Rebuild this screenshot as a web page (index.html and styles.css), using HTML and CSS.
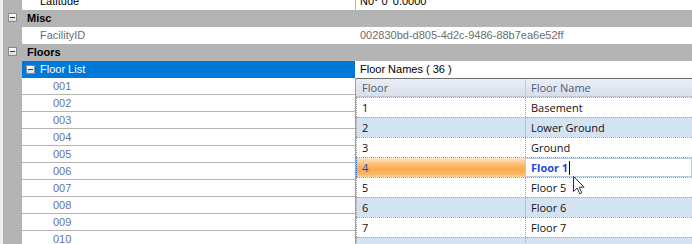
FILE: index.html
```html
<!DOCTYPE html>
<html lang="en">
<head>
    <meta charset="UTF-8">
    <meta name="viewport" content="width=device-width, initial-scale=1.0">
    <title>Property Grid - Floors</title>
    <link rel="stylesheet" href="styles.css">
</head>
<body>
    <div class="pg">
        <div class="row prop">
            <div class="margin"></div>
            <div class="name">Latitude</div>
            <div class="value split">N0° 0' 0.0000"</div>
        </div>
        <div class="row cat">
            <div class="margin"><span class="toggle"></span></div>
            <div class="name">Misc</div>
        </div>
        <div class="row prop">
            <div class="margin"></div>
            <div class="name readonly">FacilityID</div>
            <div class="value readonly">002830bd-d805-4d2c-9486-88b7ea6e52ff</div>
        </div>
        <div class="row cat">
            <div class="margin"><span class="toggle"></span></div>
            <div class="name">Floors</div>
        </div>
        <div class="row prop selected">
            <div class="margin"></div>
            <div class="name"><span class="toggle"></span>Floor List</div>
            <div class="value">Floor Names ( 36 )</div>
        </div>

        <div class="lower">
            <div class="items">
                <div class="row item"><div class="margin"></div><div class="name">001</div></div>
                <div class="row item"><div class="margin"></div><div class="name">002</div></div>
                <div class="row item"><div class="margin"></div><div class="name">003</div></div>
                <div class="row item"><div class="margin"></div><div class="name">004</div></div>
                <div class="row item"><div class="margin"></div><div class="name">005</div></div>
                <div class="row item"><div class="margin"></div><div class="name">006</div></div>
                <div class="row item"><div class="margin"></div><div class="name">007</div></div>
                <div class="row item"><div class="margin"></div><div class="name">008</div></div>
                <div class="row item"><div class="margin"></div><div class="name">009</div></div>
                <div class="row item"><div class="margin"></div><div class="name">010</div></div>
            </div>

            <div class="grid">
                <div class="grid-head">
                    <div class="cell c1">Floor</div>
                    <div class="cell c2">Floor Name</div>
                </div>
                <div class="grid-row">
                    <div class="cell c1">1</div>
                    <div class="cell c2">Basement</div>
                </div>
                <div class="grid-row alt">
                    <div class="cell c1">2</div>
                    <div class="cell c2">Lower Ground</div>
                </div>
                <div class="grid-row">
                    <div class="cell c1">3</div>
                    <div class="cell c2">Ground</div>
                </div>
                <div class="grid-row current">
                    <div class="cell c1">4</div>
                    <div class="cell c2"><div class="editor">Floor 1<span class="caret"></span></div></div>
                </div>
                <div class="grid-row">
                    <div class="cell c1">5</div>
                    <div class="cell c2">Floor 5</div>
                </div>
                <div class="grid-row alt">
                    <div class="cell c1">6</div>
                    <div class="cell c2">Floor 6</div>
                </div>
                <div class="grid-row">
                    <div class="cell c1">7</div>
                    <div class="cell c2">Floor 7</div>
                </div>
                <div class="grid-row alt">
                    <div class="cell c1">8</div>
                    <div class="cell c2">Floor 8</div>
                </div>

                <!-- mouse pointer over the editor -->
                <svg class="pointer" width="12" height="19" viewBox="0 0 12 19">
                    <path d="M0.5 0.5 L0.5 15.5 L4.2 12 L6.8 17.8 L8.8 16.9 L6.3 11.2 L11.2 11.2 Z" fill="#fff" stroke="#333" stroke-width="1" stroke-linejoin="round"/>
                </svg>
            </div>
        </div>
    </div>
</body>
</html>
```

FILE: styles.css
```css
body {
    margin: 0;
    background-color: #fff;
    font-family: "Liberation Sans", Arial, sans-serif;
    font-size: 11px;
    color: #000;
    overflow: hidden;
}
.pg {
    margin-top: -7px;
    border-left: 3px solid #f0f0f0;
}
.row {
    display: flex;
    height: 17px;
    line-height: 17px;
}
.margin {
    width: 19px;
    flex: none;
    background-color: #b4b4b4;
    position: relative;
}
.name {
    width: 333px;
    flex: none;
    padding-left: 18px;
    box-sizing: border-box;
    white-space: nowrap;
    overflow: hidden;
}
.value {
    flex: 1;
    padding-left: 4px;
    border-left: 1px solid transparent;
    white-space: nowrap;
    overflow: hidden;
}
.value.split {
    border-left-color: #b4b4b4;
}
.readonly {
    color: #6d6d6d;
}

/* category rows */
.cat {
    background-color: #b4b4b4;
}
.cat .name {
    padding-left: 5px;
    font-weight: bold;
}
.toggle {
    display: inline-block;
    width: 7px;
    height: 7px;
    border: 1px solid #8a8a8a;
    background: linear-gradient(#ffffff, #dcdcdc);
    position: relative;
    vertical-align: -1px;
}
.toggle::after {
    content: "";
    position: absolute;
    left: 1px;
    top: 3px;
    width: 5px;
    height: 1px;
    background-color: #2b3344;
}
.cat .margin .toggle {
    margin-left: 5px;
    margin-top: 3px;
    vertical-align: top;
}

/* selected property */
.selected .name {
    background-color: #0078d7;
    color: #fff;
    padding-left: 4px;
}
.selected .name .toggle {
    margin-right: 5px;
}
.selected .value {
    border-left-color: #fff;
}

/* list items below the selected property */
.lower {
    display: flex;
}
.items {
    flex: none;
}
.item .name {
    padding-left: 31px;
    color: #64749c;
    border-bottom: 1px solid #b4b4b4;
}
.item .margin {
    border-bottom: 1px solid #b4b4b4;
}

/* embedded floor grid */
.grid {
    flex: 1;
    border-left: 1px solid #a0a0a0;
    position: relative;
    font-family: "Open Sans", "Noto Sans", sans-serif;
    font-size: 11px;
    color: #111;
}
.grid-head {
    display: flex;
    height: 17px;
    line-height: 17px;
    border-top: 1px solid #6e6e6e;
    border-bottom: 1px solid #bcc6d4;
    background: linear-gradient(#eaeef6, #d8dfea);
    color: #4b5b78;
}
.grid-head .c2 {
    border-left: 1px solid #c2cad6;
}
.grid-row {
    display: flex;
    height: 19px;
    line-height: 19px;
    border-top: 1px dotted #a0a0a0;
    background-color: #fff;
}
.grid-row.alt {
    background-color: #d4e3f2;
}
.cell {
    padding-left: 5px;
    box-sizing: border-box;
    white-space: nowrap;
    overflow: hidden;
}
.c1 {
    width: 169px;
    flex: none;
}
.grid-row .c1 {
    border-left: 1px dotted #a0a0a0;
}
.grid-row .c2 {
    flex: 1;
    border-left: 1px dotted #a0a0a0;
}
.grid-head .c1 {
    padding-left: 6px;
}

/* current row with open editor */
.current .c1 {
    background: linear-gradient(#fee6c4 0%, #fcc27c 30%, #fbaa4c 60%, #fcb865 85%, #fdd29a 100%);
    color: #2049c9;
    border-left-color: #2b6fd6;
}
.current .c2 {
    padding: 0;
    border-left: none;
}
.editor {
    height: 19px;
    line-height: 17px;
    box-sizing: border-box;
    border: 1px solid #b8cde9;
    background-color: #fff;
    padding-left: 5px;
    font-weight: bold;
    color: #1f4bd0;
}
.caret {
    display: inline-block;
    width: 1px;
    height: 14px;
    background-color: #000;
    vertical-align: -3px;
    margin-left: 1px;
}
.pointer {
    position: absolute;
    left: 217px;
    top: 98px;
}
```
